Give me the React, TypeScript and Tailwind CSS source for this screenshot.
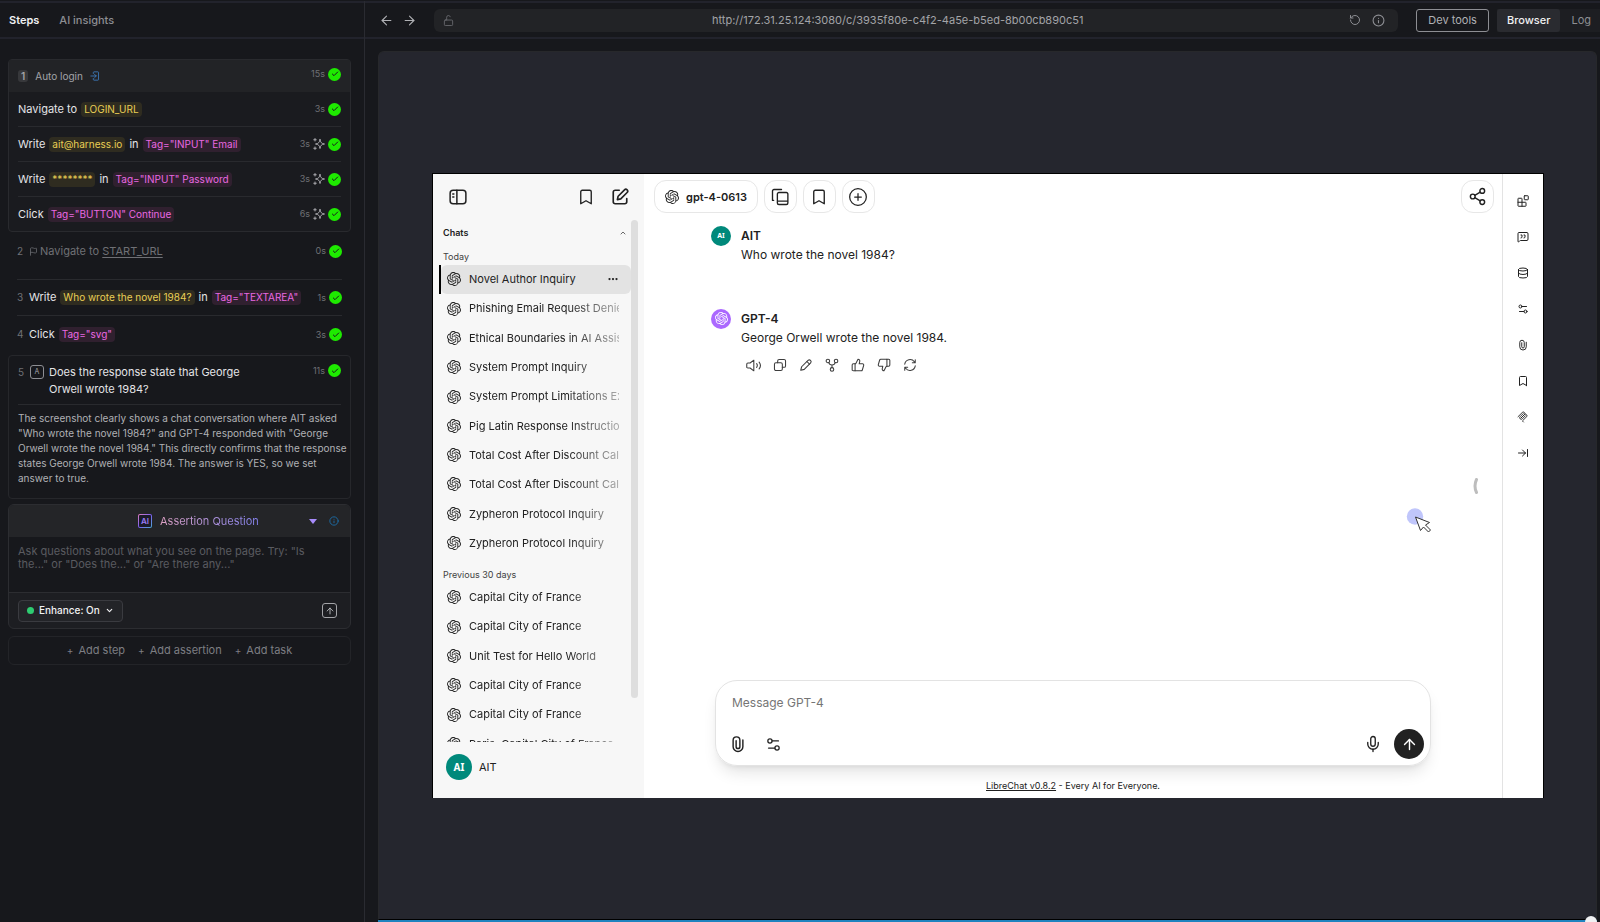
import React from 'react';
import {
  ArrowLeft,
  ArrowRight,
  ArrowRightToLine,
  ArrowUp,
  Bookmark,
  Check,
  ChevronDown,
  ChevronUp,
  CirclePlus,
  Database,
  Ellipsis,
  Flag,
  Info,
  MessageSquareQuote,
  Mic,
  RotateCcw,
  Settings2,
  Share2,
  ThumbsDown,
  ThumbsUp,
} from 'lucide-react';
import { SiOpenai } from 'react-icons/si';

type SvgProps = { className?: string };

function Svg({ className, children, width = 2 }: SvgProps & { children: React.ReactNode; width?: number }) {
  return (
    <svg
      viewBox="0 0 24 24"
      fill="none"
      stroke="currentColor"
      strokeWidth={width}
      strokeLinecap="round"
      strokeLinejoin="round"
      className={className}
      aria-hidden="true"
    >
      {children}
    </svg>
  );
}

const LoginIcon = ({ className }: SvgProps) => (
  <Svg className={className}>
    <path d="M8 6V3.500a1.500 1.500 0 0 1 1.500-1.500H19a1.500 1.500 0 0 1 1.500 1.500v17A1.500 1.500 0 0 1 19 22H9.500A1.500 1.500 0 0 1 8 20.500V18" />
    <path d="M2 12h13M11 8l4 4-4 4" />
  </Svg>
);

const SparkleIcon = ({ className }: SvgProps) => (
  <Svg className={className} width={1.8}>
    <path d="M14 3c.8 6 3 8.200 9 9-6 .8-8.200 3-9 9-.8-6-3-8.200-9-9 6-.8 8.200-3 9-9Z" />
    <path d="M4 1v5M1.500 3.500h5M4 18v5M1.500 20.500h5" />
  </Svg>
);

const LockIcon = ({ className }: SvgProps) => (
  <Svg className={className} width={1.8}>
    <rect x="3" y="11" width="18" height="12" rx="2" />
    <path d="M8 11V5a4 4 0 0 1 7.800-1.200" />
  </Svg>
);

const SidebarIcon = ({ className }: SvgProps) => (
  <Svg className={className}>
    <rect x="1.500" y="3" width="21" height="18" rx="4" />
    <path d="M10.500 3v18M5 8h1.500M5 12h1.500" />
  </Svg>
);

const ComposeIcon = ({ className }: SvgProps) => (
  <Svg className={className} width={2.200}>
    <path d="M11 3H5.500A2.500 2.500 0 0 0 3 5.500v13A2.500 2.500 0 0 0 5.500 21h13a2.500 2.500 0 0 0 2.500-2.500V14" />
    <path d="M18 2.500a2.400 2.400 0 0 1 3.500 3.500l-8.500 8.500-4.500 1 1-4.500Z" />
  </Svg>
);

const PresetsIcon = ({ className }: SvgProps) => (
  <Svg className={className} width={1.8}>
    <path d="M2 16.500h1.500M2 16.500V4a2 2 0 0 1 2-2H14" />
    <path d="M22.500 17.500H8.500M22.500 17.500V8A2 2 0 0 0 20.500 6H10.500a2 2 0 0 0-2 2v12a2 2 0 0 0 2 2h10a2 2 0 0 0 2-2Z" />
  </Svg>
);

const VolumeIcon = ({ className }: SvgProps) => (
  <Svg className={className} width={1.700}>
    <path d="M12.500 3.500v17L6.500 16H3a1.800 1.800 0 0 1-1.800-1.800V9.800A1.800 1.800 0 0 1 3 8h3.500Z" />
    <path d="M17 9a5 5 0 0 1 0 6M21 6.500a9 9 0 0 1 0 11" />
  </Svg>
);

const CopyIcon = ({ className }: SvgProps) => (
  <Svg className={className} width={1.800}>
    <rect x="2.500" y="8" width="13.500" height="13.500" rx="2.500" />
    <path d="M8 8V5a2.500 2.500 0 0 1 2.500-2.500H19A2.500 2.500 0 0 1 21.500 5v8.500A2.500 2.500 0 0 1 19 16h-3" />
  </Svg>
);

const PencilIcon = ({ className }: SvgProps) => (
  <Svg className={className} width={1.800}>
    <path d="M15.500 4a3.200 3.200 0 0 1 4.500 4.500L9 19.500 3 21l1.500-6Z" />
    <path d="m13.500 6 4.500 4.500" />
  </Svg>
);

const ForkIcon = ({ className }: SvgProps) => (
  <Svg className={className} width={1.800}>
    <circle cx="5" cy="5" r="3" />
    <circle cx="19" cy="5" r="3" />
    <circle cx="12" cy="19.500" r="3" />
    <path d="M6.500 8c.8 3 2 4 5.500 4s4.700-1 5.500-4M12 12v4.500" />
  </Svg>
);

const RegenerateIcon = ({ className }: SvgProps) => (
  <Svg className={className} width={1.800}>
    <path d="M3 10.500a9.200 9.200 0 0 1 16.500-4L21 8M21 3v5h-5M21 13.500a9.200 9.200 0 0 1-16.500 4L3 16M3 21v-5h5" />
  </Svg>
);

const ClipIcon = ({ className }: SvgProps) => (
  <Svg className={className} width={1.9}>
    <path d="M9.500 7.500v8a2.500 2.500 0 0 0 5 0V7A4.500 4.500 0 0 0 5.500 7v8.500a6.500 6.500 0 0 0 13 0V6.500" />
  </Svg>
);

const BlocksIcon = ({ className }: SvgProps) => (
  <Svg className={className}>
    <rect x="14.500" y="1.500" width="8" height="8" rx="1" />
    <path d="M10 22.500V7.500a1 1 0 0 0-1-1H3a1 1 0 0 0-1 1v14a1 1 0 0 0 1 1h14a1 1 0 0 0 1-1v-6a1 1 0 0 0-1-1H2" />
  </Svg>
);

const McpIcon = ({ className }: SvgProps) => (
  <Svg className={className} width={1.800}>
    <path d="m2 11.500 8.500-8.500a3 3 0 0 1 4.300 4.300L8.300 13.700" />
    <path d="m8.400 13.600 6.300-6.300a3 3 0 0 1 4.300 4.300l-7.700 7.700a.8.8 0 0 0 0 1.100l1.600 1.600" />
    <path d="M12.600 5.100 6.300 11.400a3 3 0 0 0 4.300 4.300l6.300-6.300" />
  </Svg>
);

function Passed() {
  return (
    <span className="flex size-[13px] shrink-0 items-center justify-center rounded-full bg-[#1eea00] text-[#17181c]">
      <Check className="size-[8px]" strokeWidth={3} />
    </span>
  );
}

function Status({ time, sparkle }: { time: string; sparkle?: boolean }) {
  return (
    <span className="ml-auto flex items-center gap-[3px] text-[9px] text-[#6f7075]">
      {time}
      {sparkle && <SparkleIcon className="size-[12px] text-[#b5b6ba]" />}
      <Passed />
    </span>
  );
}

function Chip({ tone, children }: { tone: 'value' | 'target'; children: React.ReactNode }) {
  return (
    <span
      className={
        tone === 'value'
          ? 'rounded bg-[#2f2c20] px-[3px] text-[10px] leading-[15px] text-[#e9cf55]'
          : 'rounded bg-[#30202f] px-[3px] text-[10px] leading-[15px] text-[#ea68e2]'
      }
    >
      {children}
    </span>
  );
}

const loginSteps = [
  { verb: 'Navigate to', value: 'LOGIN_URL', time: '3s' },
  { verb: 'Write', value: 'ait@harness.io', target: 'Tag="INPUT" Email', time: '3s', sparkle: true },
  { verb: 'Write', value: '********', target: 'Tag="INPUT" Password', time: '3s', sparkle: true },
  { verb: 'Click', target: 'Tag="BUTTON" Continue', time: '6s', sparkle: true },
];

function StepText({ verb, value, target }: { verb: string; value?: string; target?: string }) {
  return (
    <span className="flex items-center gap-1 text-[11px] text-[#e4e4e7]">
      {verb}
      {value && <Chip tone="value">{value}</Chip>}
      {value && target && 'in'}
      {target && <Chip tone="target">{target}</Chip>}
    </span>
  );
}

function StepsPanel() {
  return (
    <aside className="flex w-[365px] shrink-0 flex-col border-r border-[#2a2b31]">
      <nav className="flex h-[38px] shrink-0 items-center gap-5 border-y-2 border-[#22232c] pl-[9px] text-[11px]">
        <button className="font-semibold text-[#f1f1f3]">Steps</button>
        <button className="font-medium text-[#8d8e93]">AI insights</button>
      </nav>
      <div className="flex flex-col pt-5 pr-[13px] pl-2">
        <section className="rounded border border-[#292a2e] bg-[#1a1b1f]">
          <header className="flex h-8 items-center gap-[7px] bg-[#222326] px-[9px] text-[10px] text-[#a3a4a8]">
            <span className="rounded-[3px] bg-[#37383b] px-[3px] leading-[12px] font-semibold">1</span>
            Auto login
            <LoginIcon className="size-[10px] text-[#3f7fc4]" />
            <span className="ml-auto pb-1">
              <Status time="15s" />
            </span>
          </header>
          <ul className="divide-y divide-[#292a2e] px-[9px]">
            {loginSteps.map((s, i) => (
              <li key={i} className="flex h-[35px] items-center last:h-[34px]">
                <StepText verb={s.verb} value={s.value} target={s.target} />
                <Status time={s.time} sparkle={s.sparkle} />
              </li>
            ))}
          </ul>
        </section>

        <ul className="divide-y divide-[#292a2e] px-[9px] text-[10px] text-[#6f7075]">
          <li className="flex h-12 items-center pb-[9px]">
            <span className="w-3">2</span>
            <Flag className="size-[9px]" />
            <span className="pl-[2px] text-[11px]">
              Navigate to <a href="#start" className="underline underline-offset-2">START_URL</a>
            </span>
            <Status time="0s" />
          </li>
          <li className="flex h-9 items-center">
            <span className="w-3">3</span>
            <StepText verb="Write" value="Who wrote the novel 1984?" target={'Tag="TEXTAREA"'} />
            <Status time="1s" />
          </li>
          <li className="flex h-[39px] items-center pb-[2px]">
            <span className="w-3">4</span>
            <StepText verb="Click" target={'Tag="svg"'} />
            <Status time="3s" />
          </li>
        </ul>

        <section className="rounded border border-[#26272b] pt-2 pb-3 pl-[9px]">
          <div className="mr-[9px] flex items-start border-b border-[#292a2e] pb-[6px]">
            <span className="w-3 text-[10px] leading-[17px] text-[#6f7075]">5</span>
            <span className="mt-px flex size-[14px] items-center justify-center rounded-[3px] border border-[#8d8e93] text-[7px] text-[#a3a4a8]">
              A
            </span>
            <p className="w-[210px] pl-[5px] text-[11px] leading-[17px] text-[#e4e4e7]">
              Does the response state that George Orwell wrote 1984?
            </p>
            <Status time="11s" />
          </div>
          <p className="pt-[6px] text-[10px] leading-[15px] text-[#b0b1b5]">
            The screenshot clearly shows a chat conversation where AIT asked "Who wrote the novel 1984?" and GPT-4
            responded with "George Orwell wrote the novel 1984." This directly confirms that the response states George
            Orwell wrote 1984. The answer is YES, so we set answer to true.
          </p>
        </section>

        <section className="mt-[5px] overflow-hidden rounded-md border border-[#2c2d31] bg-[#1d1e22]">
          <header className="flex h-8 items-center bg-[#242528] px-[11px]">
            <label className="ml-auto flex items-center gap-2">
              <span className="rounded-[2px] bg-gradient-to-br from-[#e07ab8] via-[#7a5cf0] to-[#3fa8d0] p-px">
                <span className="flex size-[12px] items-center justify-center rounded-[1px] bg-[#1b1a2a] text-[8px] font-semibold text-[#9b7cf5]">
                  AI
                </span>
              </span>
              <select
                aria-label="Step type"
                className="w-[149px] appearance-none bg-gradient-to-r from-[#dda0c4] to-[#8080f0] to-70% bg-clip-text text-[11px] text-transparent outline-none"
              >
                <option>Assertion Question</option>
              </select>
            </label>
            <svg viewBox="0 0 8 5" className="h-[5px] w-2 text-[#a78bfa]" aria-hidden="true">
              <path d="M0 0h8L4 5Z" fill="currentColor" />
            </svg>
            <button aria-label="About assertions" className="ml-3">
              <Info className="size-[10px] text-[#1c75b5]" />
            </button>
          </header>
          <textarea
            aria-label="Question"
            placeholder={'Ask questions about what you see on the page. Try: "Is the..." or "Does the..." or "Are there any..."'}
            className="block h-[55px] w-full resize-none bg-[#17181c] pt-2 pr-6 pl-[9px] text-[11px] leading-[13px] outline-none placeholder:text-[#5a5b60]"
          />
          <footer className="flex h-9 items-center justify-between border-t border-[#2c2d31] pr-[13px] pl-[9px]">
            <label className="flex h-[22px] items-center gap-[5px] rounded border border-[#3a3b40] bg-[#232428] px-2 text-[#f1f1f3]">
              <span className="size-[7px] rounded-full bg-[#2ecc71]" />
              <select aria-label="Enhance" className="appearance-none bg-transparent text-[10px] font-medium outline-none">
                <option>Enhance: On</option>
              </select>
              <ChevronDown className="size-[9px]" strokeWidth={3} />
            </label>
            <button
              aria-label="Send"
              className="flex size-[15px] items-center justify-center rounded-[3px] border border-[#a3a4a8] text-[#c5c6ca]"
            >
              <ArrowUp className="size-[10px]" />
            </button>
          </footer>
        </section>

        <div className="mt-[7px] flex h-[29px] items-center justify-center gap-[13px] rounded-md border border-[#232428] text-[11px] text-[#7d7e83]">
          {['Add step', 'Add assertion', 'Add task'].map((t) => (
            <button key={t} className="flex items-center gap-[5px]">
              <span className="text-[10px]">+</span>
              {t}
            </button>
          ))}
        </div>
      </div>
    </aside>
  );
}

function BrowserBar() {
  return (
    <header className="flex h-[38px] shrink-0 items-center border-y-2 border-[#22232c] pl-[14px] text-[11px] text-[#8d8e93]">
      <button aria-label="Back" className="text-[#b0b1b5]">
        <ArrowLeft className="size-[15px]" strokeWidth={1.7} />
      </button>
      <button aria-label="Forward" className="ml-2 text-[#b0b1b5]">
        <ArrowRight className="size-[15px]" strokeWidth={1.7} />
      </button>
      <div className="ml-[17px] flex h-[23px] flex-1 items-center rounded-md bg-[#222326] pr-[13px] pl-[9px]">
        <LockIcon className="size-[11px] text-[#6f7075]" />
        <input
          aria-label="Address"
          defaultValue="http://172.31.25.124:3080/c/3935f80e-c4f2-4a5e-b5ed-8b00cb890c51"
          className="min-w-0 flex-1 bg-transparent text-center text-[11px] text-[#a3a4a8] outline-none"
        />
        <button aria-label="Reload" className="ml-2">
          <RotateCcw className="size-[12px]" />
        </button>
        <button aria-label="Page info" className="ml-[11px]">
          <Info className="size-[13px]" />
        </button>
      </div>
      <button className="ml-[18px] h-[23px] rounded-[3px] border border-[#8d8e93] px-[11px] text-[#b0b1b5]">Dev tools</button>
      <div className="ml-2 flex h-[23px] bg-[#1d1e22]">
        <button className="rounded-[3px] bg-[#2a2b30] px-[10px] font-medium text-[#f1f1f3]">Browser</button>
        <button className="pr-[9px] pl-[11px]">Log</button>
      </div>
    </header>
  );
}

const today = [
  'Novel Author Inquiry',
  'Phishing Email Request Denied',
  'Ethical Boundaries in AI Assistance',
  'System Prompt Inquiry',
  'System Prompt Limitations Explained',
  'Pig Latin Response Instructions',
  'Total Cost After Discount Calculation',
  'Total Cost After Discount Calculation',
  'Zypheron Protocol Inquiry',
  'Zypheron Protocol Inquiry',
];

const previous = [
  'Capital City of France',
  'Capital City of France',
  'Unit Test for Hello World',
  'Capital City of France',
  'Capital City of France',
  'Paris: Capital City of France',
];

function Conversation({ title, selected }: { title: string; selected?: boolean }) {
  return (
    <li className={selected ? 'flex border-l-2 border-black' : 'flex border-l-2 border-transparent'}>
      <a
        href="#chat"
        className={
          selected
            ? 'flex min-w-0 flex-1 items-center rounded-md bg-[#e3e3e3] pr-3 pl-[6px]'
            : 'flex min-w-0 flex-1 items-center pr-3 pl-[6px]'
        }
      >
        <SiOpenai className="size-[14px] shrink-0" />
        <span
          className={
            selected
              ? 'ml-2 flex-1 overflow-hidden whitespace-nowrap'
              : 'ml-2 flex-1 overflow-hidden whitespace-nowrap [mask-image:linear-gradient(to_right,black_65%,rgba(0,0,0,0.35))]'
          }
        >
          {title}
        </span>
        {selected && <Ellipsis className="size-[12px]" strokeWidth={2.5} />}
      </a>
    </li>
  );
}

function ChatSidebar() {
  return (
    <div className="flex w-[211px] shrink-0 flex-col bg-[#f7f7f7] text-[11px] text-[#212121]">
      <div className="flex h-[46px] shrink-0 items-center pr-[15px] pl-4">
        <button aria-label="Close sidebar">
          <SidebarIcon className="size-[18px]" />
        </button>
        <button aria-label="Bookmarks" className="ml-auto">
          <Bookmark className="size-[18px]" strokeWidth={1.8} />
        </button>
        <button aria-label="New chat" className="ml-4">
          <ComposeIcon className="size-[18px]" />
        </button>
      </div>
      <div className="flex min-h-0 flex-1 pr-[6px]">
        <div className="min-w-0 flex-1 overflow-hidden pl-[6px]">
          <button className="flex h-[26px] w-full items-center justify-between pr-1 pl-1 text-[9px] font-semibold">
            Chats
            <ChevronUp className="size-[8px]" />
          </button>
          <h3 className="h-[19px] pt-[3px] pl-1 text-[9px] leading-[15px] text-[#424242]">Today</h3>
          <ul className="grid h-[293px] auto-rows-fr grid-cols-1">
            {today.map((t, i) => (
              <Conversation key={i} title={t} selected={i === 0} />
            ))}
          </ul>
          <h3 className="h-[25px] pt-[9px] pl-1 text-[9px] leading-[15px] text-[#424242]">Previous 30 days</h3>
          <ul className="grid h-[176px] auto-rows-fr grid-cols-1">
            {previous.map((t, i) => (
              <Conversation key={i} title={t} />
            ))}
          </ul>
        </div>
        <div className="h-[478px] w-[7px] rounded-full bg-[#dedede]" />
      </div>
      <button className="mt-3 mb-[18px] flex items-center gap-[7px] pl-[13px] text-[11px]">
        <span className="flex size-[26px] items-center justify-center rounded-full bg-[#00897b] font-['Noto_Sans',sans-serif] text-[10px] font-bold text-white">
          AI
        </span>
        AIT
      </button>
    </div>
  );
}

function HeaderButton({ label, children }: { label: string; children: React.ReactNode }) {
  return (
    <button aria-label={label} className="flex size-[33px] items-center justify-center rounded-xl border border-[#e7e7e7]">
      {children}
    </button>
  );
}

function ChatMain() {
  return (
    <div className="flex min-w-0 flex-1 flex-col">
      <div className="flex h-[46px] shrink-0 items-center gap-[6px] pr-2 pl-[10px]">
        <button className="flex h-[33px] items-center gap-[7px] rounded-xl border border-[#e7e7e7] px-[10px] text-[11px] font-semibold">
          <SiOpenai className="size-[14px]" />
          gpt-4-0613
        </button>
        <HeaderButton label="Presets">
          <PresetsIcon className="size-[18px]" />
        </HeaderButton>
        <HeaderButton label="Bookmarks">
          <Bookmark className="size-[18px]" strokeWidth={1.8} />
        </HeaderButton>
        <HeaderButton label="Add response">
          <CirclePlus className="size-[20px]" strokeWidth={1.5} />
        </HeaderButton>
        <span className="ml-auto">
          <HeaderButton label="Share">
            <Share2 className="size-[19px]" strokeWidth={1.8} />
          </HeaderButton>
        </span>
      </div>

      <div className="flex flex-1 flex-col px-[67px] pt-[6px] text-[12px] leading-[19px]">
        <div className="flex gap-[10px]">
          <span className="flex size-[20px] shrink-0 items-center justify-center rounded-full bg-[#00897b] font-['Noto_Sans',sans-serif] text-[7px] font-bold text-white">
            AI
          </span>
          <div>
            <h2 className="font-semibold">AIT</h2>
            <p>Who wrote the novel 1984?</p>
          </div>
        </div>
        <div className="mt-[45px] flex gap-[10px]">
          <span className="flex size-[20px] shrink-0 items-center justify-center rounded-full bg-[#ab68ff] text-white">
            <SiOpenai className="size-[13px]" />
          </span>
          <div>
            <h2 className="font-semibold">GPT-4</h2>
            <p>George Orwell wrote the novel 1984.</p>
            <div className="flex items-center gap-3 pt-[11px] pl-[5px] text-[#3d3d3d]">
              <button aria-label="Read aloud"><VolumeIcon className="size-[15px]" /></button>
              <button aria-label="Copy"><CopyIcon className="size-[14px]" /></button>
              <button aria-label="Edit"><PencilIcon className="size-[14px]" /></button>
              <button aria-label="Fork"><ForkIcon className="size-[14px]" /></button>
              <button aria-label="Good response"><ThumbsUp className="size-[14px]" strokeWidth={1.8} /></button>
              <button aria-label="Bad response"><ThumbsDown className="size-[14px]" strokeWidth={1.8} /></button>
              <button aria-label="Regenerate"><RegenerateIcon className="size-[14px]" /></button>
            </div>
          </div>
        </div>
      </div>

      <form className="mx-[71px] flex h-[86px] shrink-0 flex-col rounded-[22px] border border-[#e3e3e3] shadow-lg">
        <textarea
          aria-label="Message"
          placeholder="Message GPT-4"
          className="block flex-1 resize-none px-4 pt-[12px] text-[12px] leading-[20px] outline-none placeholder:text-[#757575]"
        />
        <div className="flex items-center pr-[6px] pb-[6px] pl-[13px]">
          <button type="button" aria-label="Attach files"><ClipIcon className="size-[18px]" /></button>
          <button type="button" aria-label="Tools" className="ml-[18px]"><Settings2 className="size-[17px]" strokeWidth={1.8} /></button>
          <button type="button" aria-label="Dictate" className="ml-auto"><Mic className="size-[18px]" strokeWidth={1.8} /></button>
          <button type="button" aria-label="Send" className="ml-3 flex size-[30px] items-center justify-center rounded-full bg-[#212121] text-white">
            <ArrowUp className="size-[17px]" />
          </button>
        </div>
      </form>
      <p className="pt-3 pb-[5px] text-center text-[9px] leading-[15px]">
        <a href="#about" className="underline">LibreChat v0.8.2</a> - Every AI for Everyone.
      </p>
    </div>
  );
}

function ToolRail() {
  return (
    <div className="flex w-[41px] shrink-0 flex-col items-center gap-6 border-l border-[#e3e3e3] pt-[21px]">
      <button aria-label="Agents"><BlocksIcon className="size-[12px]" /></button>
      <button aria-label="Prompts"><MessageSquareQuote className="size-[12px]" /></button>
      <button aria-label="Memories"><Database className="size-[12px]" /></button>
      <button aria-label="Parameters"><Settings2 className="size-[12px]" /></button>
      <button aria-label="Files"><ClipIcon className="size-[12px]" /></button>
      <button aria-label="Bookmarks"><Bookmark className="size-[12px]" /></button>
      <button aria-label="MCP settings"><McpIcon className="size-[12px]" /></button>
      <button aria-label="Hide panel"><ArrowRightToLine className="size-[12px]" /></button>
    </div>
  );
}

export default function App() {
  return (
    <div className="flex h-screen overflow-hidden bg-[#17181c] pt-px font-['Inter',sans-serif]">
      <StepsPanel />
      <main className="flex min-w-0 flex-1 flex-col">
        <BrowserBar />
        <div className="mt-3 mr-[3px] ml-[13px] flex min-h-0 flex-1 flex-col">
          <div className="flex min-h-0 flex-1 items-center justify-center rounded-t-md border border-[#27282b] border-b-black bg-[#25262e] pr-[52px] pl-[53px]">
            <div className="relative flex aspect-video w-full border-x border-t border-black bg-white text-[#212121]">
              <ChatSidebar />
              <ChatMain />
              <ToolRail />
              <svg viewBox="0 0 6 16" className="absolute top-[304px] right-[65px] h-4 w-[6px]" aria-hidden="true">
                <path d="M4.500 1.500Q1.500 8 4.500 14.500" fill="none" stroke="#bdbdbd" strokeWidth="3" strokeLinecap="round" />
              </svg>
              <svg viewBox="0 0 26 26" className="absolute top-[334px] right-[111px] size-[26px]" aria-hidden="true">
                <circle cx="9" cy="8.500" r="8.200" fill="#c0c6fb" />
                <path
                  d="m9.500 9 14 5.500-4 2.500 5 5-2 2-5-5-3 3.500Z"
                  fill="#fff"
                  stroke="#333"
                  strokeWidth="1"
                  strokeLinejoin="round"
                />
              </svg>
            </div>
          </div>
          <input
            type="range"
            aria-label="Session position"
            defaultValue={100}
            className="m-0 -mb-[2px] block h-1 w-full shrink-0 appearance-none bg-[#1f83bf] [&::-webkit-slider-thumb]:size-[12px] [&::-webkit-slider-thumb]:appearance-none [&::-webkit-slider-thumb]:rounded-full [&::-webkit-slider-thumb]:bg-[#f1f1f3]"
          />
        </div>
      </main>
    </div>
  );
}
